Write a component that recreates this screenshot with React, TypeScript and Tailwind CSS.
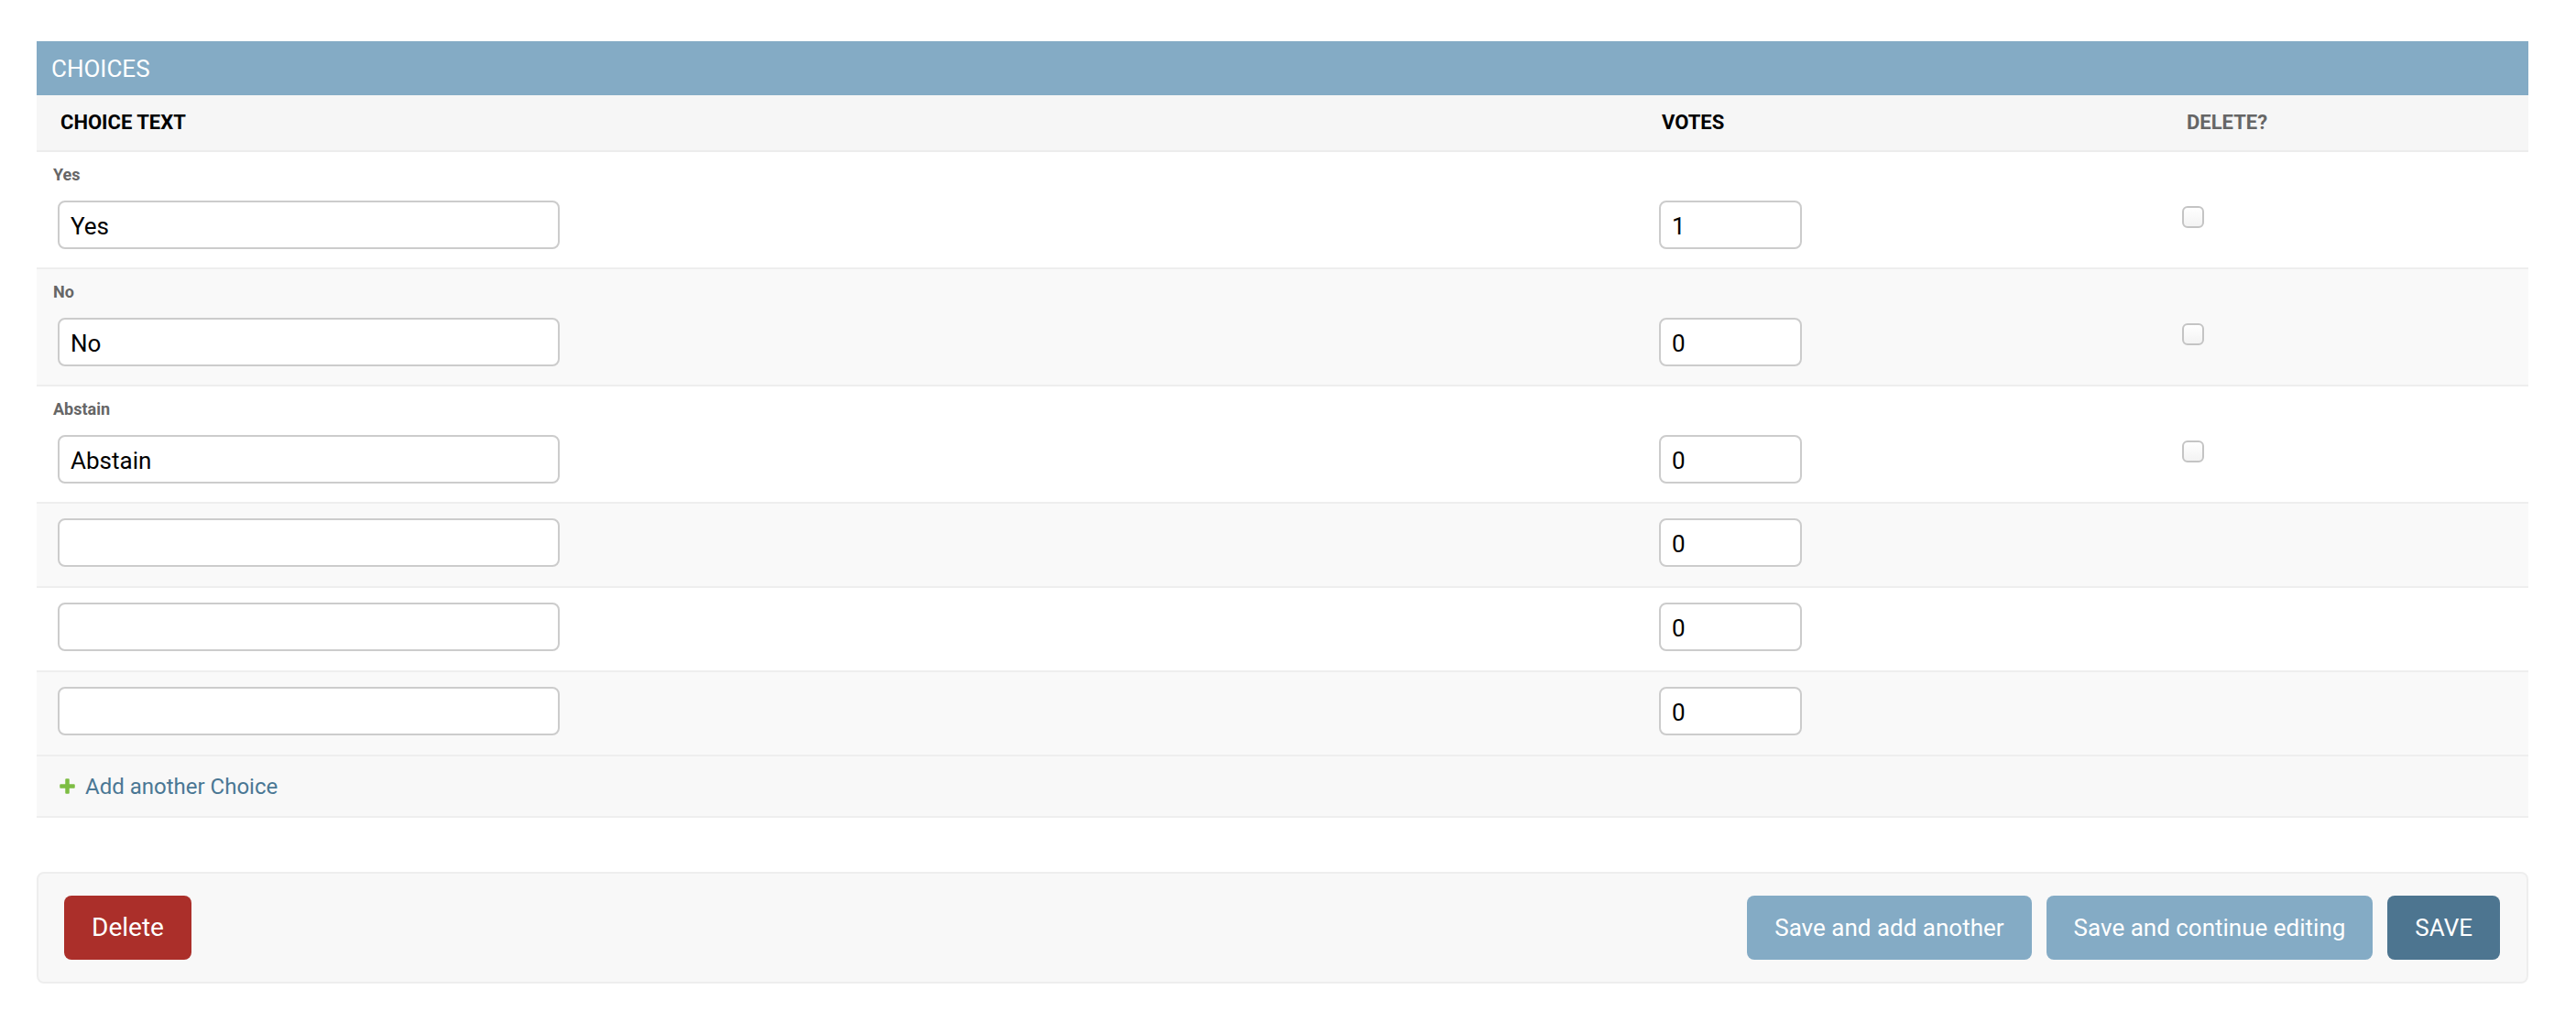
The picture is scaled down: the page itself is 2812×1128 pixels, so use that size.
import React from "react";

type Row = { orig: string | null; text: string; votes: string; del: boolean };

const rows: Row[] = [
  { orig: "Yes", text: "Yes", votes: "1", del: true },
  { orig: "No", text: "No", votes: "0", del: true },
  { orig: "Abstain", text: "Abstain", votes: "0", del: true },
  { orig: null, text: "", votes: "0", del: false },
  { orig: null, text: "", votes: "0", del: false },
  { orig: null, text: "", votes: "0", del: false },
];

function PlusIcon() {
  return (
    <svg width="21" height="21" viewBox="0 0 1792 1792" className="shrink-0">
      <path
        fill="#7dbd43"
        d="M1600 796v192q0 40-28 68t-68 28h-416v416q0 40-28 68t-68 28h-192q-40 0-68-28t-28-68v-416h-416q-40 0-68-28t-28-68v-192q0-40 28-68t68-28h416v-416q0-40 28-68t68-28h192q40 0 68 28t28 68v416h416q40 0 68 28t28 68z"
      />
    </svg>
  );
}

export default function App() {
  return (
    <div className="min-h-[1128px] w-[2812px] bg-white font-['Roboto',sans-serif] pt-[45px] pl-[40px]">
      <div className="w-[2720px]">
        {/* caption */}
        <div className="h-[59px] bg-[#84abc5] flex items-center pl-[16px]">
          <h2 className="text-[26px] text-white font-normal leading-none tracking-normal">CHOICES</h2>
        </div>

        {/* header row */}
        <div className="grid grid-cols-[1748px_571px_1fr] h-[62px] bg-[#f6f6f6] border-b-2 border-[#ececec] items-center">
          <div className="pl-[26px] text-[22px] font-bold text-black leading-none">CHOICE TEXT</div>
          <div className="pl-[26px] text-[22px] font-bold text-black leading-none">VOTES</div>
          <div className="pl-[28px] text-[22px] font-bold text-[#666] leading-none">DELETE?</div>
        </div>

        {/* rows */}
        {rows.map((r, i) => (
          <div
            key={i}
            className={`border-b-2 border-[#eeeeee] ${i % 2 === 1 ? "bg-[#f9f9f9]" : "bg-white"} ${
              r.orig ? "pt-[14px] pb-[20px]" : "pt-[16px] pb-[21px]"
            }`}
          >
            {r.orig && (
              <p className="pl-[18px] text-[18px] leading-[21px] font-bold text-[#666] mb-[18px]">{r.orig}</p>
            )}
            <div className="grid grid-cols-[1748px_571px_1fr] items-start">
              <div className="pl-[23px]">
                <input
                  type="text"
                  readOnly
                  defaultValue={r.text}
                  className="block w-[548px] h-[53px] border-2 border-[#cccccc] rounded-[8px] bg-white px-[12px] pt-[2px] text-[26px] text-black font-['Roboto',sans-serif] outline-none"
                />
              </div>
              <div className="pl-[23px]">
                <input
                  type="text"
                  readOnly
                  defaultValue={r.votes}
                  className="block w-[156px] h-[53px] border-2 border-[#cccccc] rounded-[8px] bg-white px-[12px] pt-[2px] text-[26px] text-black font-['Roboto',sans-serif] outline-none"
                />
              </div>
              <div className="pl-[23px] pt-[6px]">
                {r.del && (
                  <input
                    type="checkbox"
                    className="block appearance-none w-[24px] h-[24px] border-2 border-[#c4c4c4] rounded-[6px] bg-gradient-to-b from-white to-[#f3f3f3] m-0"
                  />
                )}
              </div>
            </div>
          </div>
        ))}

        {/* add row */}
        <div className="h-[67px] bg-[#f8f8f8] border-b-2 border-[#eeeeee] flex items-center pl-[23px] gap-[9px]">
          <PlusIcon />
          <a href="#" className="text-[24px] text-[#4a7794] leading-none">
            Add another Choice
          </a>
        </div>

        {/* submit row */}
        <div className="mt-[59px] h-[122px] border-2 border-[#eeeeee] rounded-[8px] bg-[#f8f8f8] flex items-center justify-between px-[28px]">
          <a href="#" className="h-[70px] px-[30px] rounded-[8px] bg-[#ab2f2a] text-white text-[28px] flex items-center leading-none">
            Delete
          </a>
          <div className="flex items-center gap-[16px] pr-[1px]">
            <button className="h-[70px] px-[30px] rounded-[8px] bg-[#84abc5] text-white text-[26px] leading-none font-['Roboto',sans-serif]">
              Save and add another
            </button>
            <button className="h-[70px] px-[30px] rounded-[8px] bg-[#84abc5] text-white text-[26px] leading-none font-['Roboto',sans-serif]">
              Save and continue editing
            </button>
            <button className="h-[70px] px-[30px] rounded-[8px] bg-[#4d7590] text-white text-[26px] leading-none font-['Roboto',sans-serif]">
              SAVE
            </button>
          </div>
        </div>
      </div>
    </div>
  );
}
